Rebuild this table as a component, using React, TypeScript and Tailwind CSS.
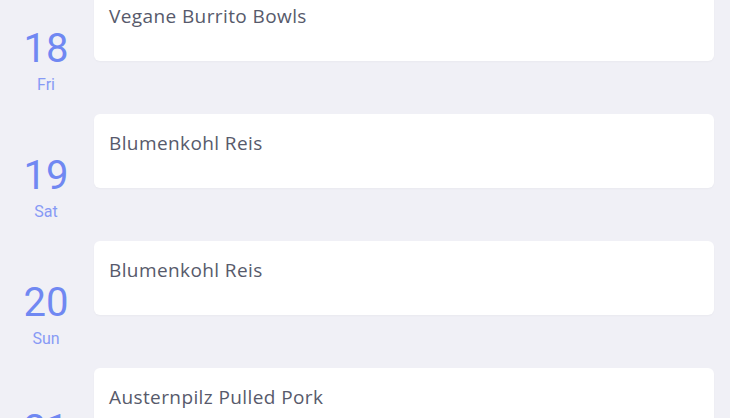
const days = [
	{ day: 18, weekday: "Fri", meal: "Vegane Burrito Bowls" },
	{ day: 19, weekday: "Sat", meal: "Blumenkohl Reis" },
	{ day: 20, weekday: "Sun", meal: "Blumenkohl Reis" },
	{ day: 21, weekday: "Mon", meal: "Austernpilz Pulled Pork" },
	{ day: 22, weekday: "Tue", meal: "Linsen Curry" },
];

export default function App() {
	return (
		<div className="h-[418px] w-[730px] overflow-hidden bg-[#f0f0f6]">
			{/* Meal plan list, scrolled a little */}
			<div className="-mt-[13px] flex flex-col">
				{days.map((d) => (
					<div key={d.day} className="flex h-[127px] items-start">
						<div className="flex w-[94px] flex-col items-center pt-[42px] pr-[2px] font-['Roboto',sans-serif] text-[#7088f2]">
							<span className="text-[40px] leading-none">{d.day}</span>
							<span className="mt-[8px] text-[16px] leading-none text-[#879af5]">{d.weekday}</span>
						</div>
						<div className="mr-4 h-[74px] flex-1 rounded-md bg-white px-[15px] pt-[17px] shadow-[0_1px_2px_rgba(0,0,0,0.03)]">
							<p className="font-['Open_Sans',sans-serif] text-[19px] leading-[24px] tracking-[0.4px] text-[#575a6b]">{d.meal}</p>
						</div>
					</div>
				))}
			</div>
		</div>
	);
}
